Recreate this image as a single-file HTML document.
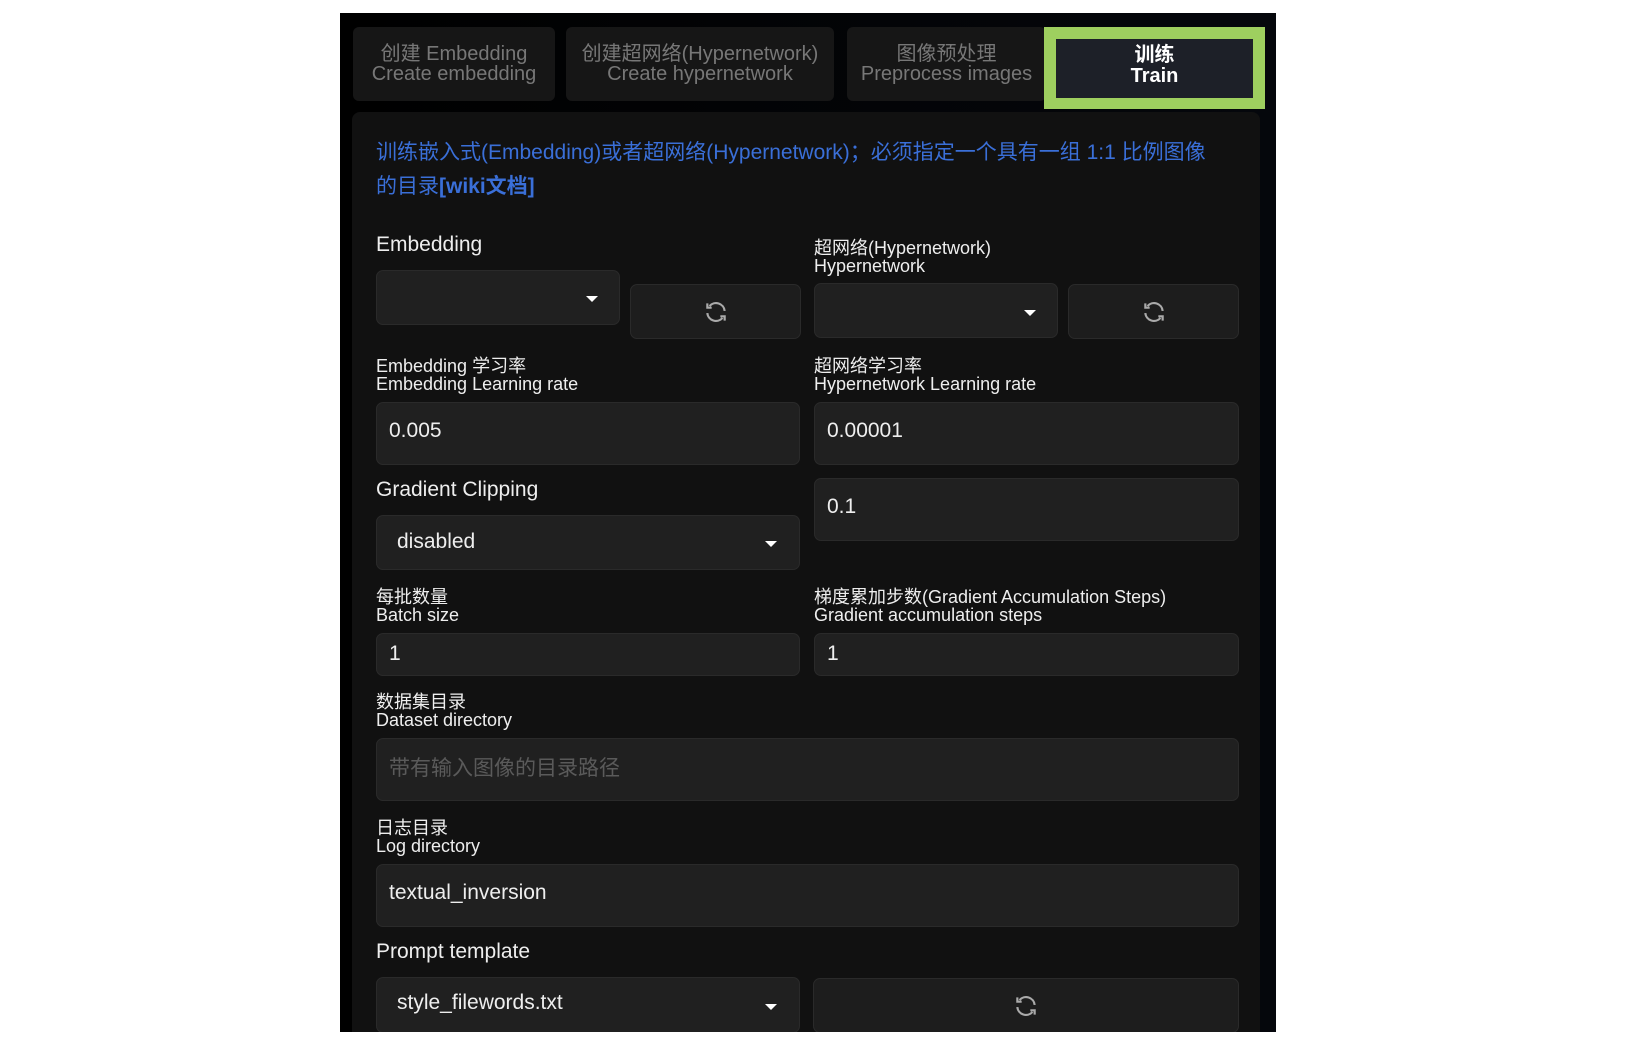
<!DOCTYPE html>
<html><head><meta charset="utf-8"><style>
*{box-sizing:border-box;margin:0;padding:0}
body{width:1642px;height:1044px;background:#fff;position:relative;overflow:hidden;font-family:"Liberation Sans","Noto Sans CJK SC",sans-serif;color:#e8e8e8}
.a{position:absolute}
#bg{left:340px;top:13px;width:936px;height:1019px;background:linear-gradient(90deg,#000 0%,#05070c 100%)}
.tab{position:absolute;top:27px;height:74px;background:#161616;border-radius:6px;color:#777;font-size:20px;line-height:20px;text-align:center;display:flex;flex-direction:column;justify-content:center}
#panel{left:352px;top:112px;width:908px;height:920px;background:#111;border-radius:8px 8px 0 0}
.lbl{position:absolute;font-size:18px;line-height:18px;color:#eee}
.lbl1{position:absolute;font-size:21px;color:#eee}
.box{position:absolute;background:#202020;border:1px solid #2a2a2a;border-radius:7px;font-size:21px;color:#eee;padding-left:12px;padding-bottom:6px;display:flex;align-items:center}
.tri{position:absolute;width:0;height:0;border-left:6px solid transparent;border-right:6px solid transparent;border-top:6px solid #fff}
.btn{position:absolute;background:#1d1d1d;border:1px solid #2a2a2a;border-radius:7px;display:flex;align-items:center;justify-content:center}
</style></head><body>
<div id="bg" class="a"></div>
<div class="tab" style="left:353px;width:202px">创建 Embedding<br>Create embedding</div>
<div class="tab" style="left:566px;width:268px">创建超网络(Hypernetwork)<br>Create hypernetwork</div>
<div class="tab" style="left:847px;width:199px">图像预处理<br>Preprocess images</div>
<div class="a" style="left:1044px;top:27px;width:221px;height:82px;background:#9ecf5f"></div>
<div class="a" style="left:1056px;top:39px;width:197px;height:59px;background:#1d2028;color:#fff;font-weight:bold;font-size:20px;line-height:21px;text-align:center;padding-top:6px">训练<br>Train</div>
<div id="panel" class="a"></div>
<div class="a" style="left:376px;top:136px;width:850px;font-size:21px;line-height:34px;color:#3a6fd8">训练嵌入式(Embedding)或者超网络(Hypernetwork)；必须指定一个具有一组 1:1 比例图像的目录<b>[wiki文档]</b></div>

<div class="lbl1" style="left:376px;top:233px">Embedding</div>
<div class="box" style="left:376px;top:270px;width:244px;height:55px"></div><div class="tri" style="left:586px;top:296px"></div>
<div class="btn" style="left:630px;top:284px;width:171px;height:55px"><svg width="26" height="26" viewBox="0 0 24 24" fill="none" stroke="#aaa" stroke-width="2"><path d="M20 11a8 8 0 0 0-14-4.5M4 4v4h4M4 13a8 8 0 0 0 14 4.5M20 20v-4h-4"/></svg></div>
<div class="lbl" style="left:814px;top:239px">超网络(Hypernetwork)<br>Hypernetwork</div>
<div class="box" style="left:814px;top:283px;width:244px;height:55px"></div><div class="tri" style="left:1024px;top:310px"></div>
<div class="btn" style="left:1068px;top:284px;width:171px;height:55px"><svg width="26" height="26" viewBox="0 0 24 24" fill="none" stroke="#aaa" stroke-width="2"><path d="M20 11a8 8 0 0 0-14-4.5M4 4v4h4M4 13a8 8 0 0 0 14 4.5M20 20v-4h-4"/></svg></div>

<div class="lbl" style="left:376px;top:357px">Embedding 学习率<br>Embedding Learning rate</div>
<div class="box" style="left:376px;top:402px;width:424px;height:63px">0.005</div>
<div class="lbl" style="left:814px;top:357px">超网络学习率<br>Hypernetwork Learning rate</div>
<div class="box" style="left:814px;top:402px;width:425px;height:63px">0.00001</div>

<div class="lbl1" style="left:376px;top:478px">Gradient Clipping</div>
<div class="box" style="left:376px;top:515px;width:424px;height:55px;padding-left:20px;padding-bottom:2px">disabled</div><div class="tri" style="left:765px;top:541px"></div>
<div class="box" style="left:814px;top:478px;width:425px;height:63px">0.1</div>

<div class="lbl" style="left:376px;top:588px">每批数量<br>Batch size</div>
<div class="box" style="left:376px;top:633px;width:424px;height:43px;padding-bottom:2px">1</div>
<div class="lbl" style="left:814px;top:588px">梯度累加步数(Gradient Accumulation Steps)<br>Gradient accumulation steps</div>
<div class="box" style="left:814px;top:633px;width:425px;height:43px;padding-bottom:2px">1</div>

<div class="lbl" style="left:376px;top:693px">数据集目录<br>Dataset directory</div>
<div class="box" style="left:376px;top:738px;width:863px;height:63px;color:#5a5a5a">带有输入图像的目录路径</div>

<div class="lbl" style="left:376px;top:819px">日志目录<br>Log directory</div>
<div class="box" style="left:376px;top:864px;width:863px;height:63px">textual_inversion</div>

<div class="lbl1" style="left:376px;top:940px">Prompt template</div>
<div class="box" style="left:376px;top:977px;width:424px;height:56px;padding-left:20px;padding-bottom:4px">style_filewords.txt</div><div class="tri" style="left:765px;top:1004px"></div>
<div class="btn" style="left:813px;top:978px;width:426px;height:55px"><svg width="26" height="26" viewBox="0 0 24 24" fill="none" stroke="#aaa" stroke-width="2"><path d="M20 11a8 8 0 0 0-14-4.5M4 4v4h4M4 13a8 8 0 0 0 14 4.5M20 20v-4h-4"/></svg></div>
<div class="a" style="left:0;top:1032px;width:1642px;height:12px;background:#fff"></div>
</body></html>
